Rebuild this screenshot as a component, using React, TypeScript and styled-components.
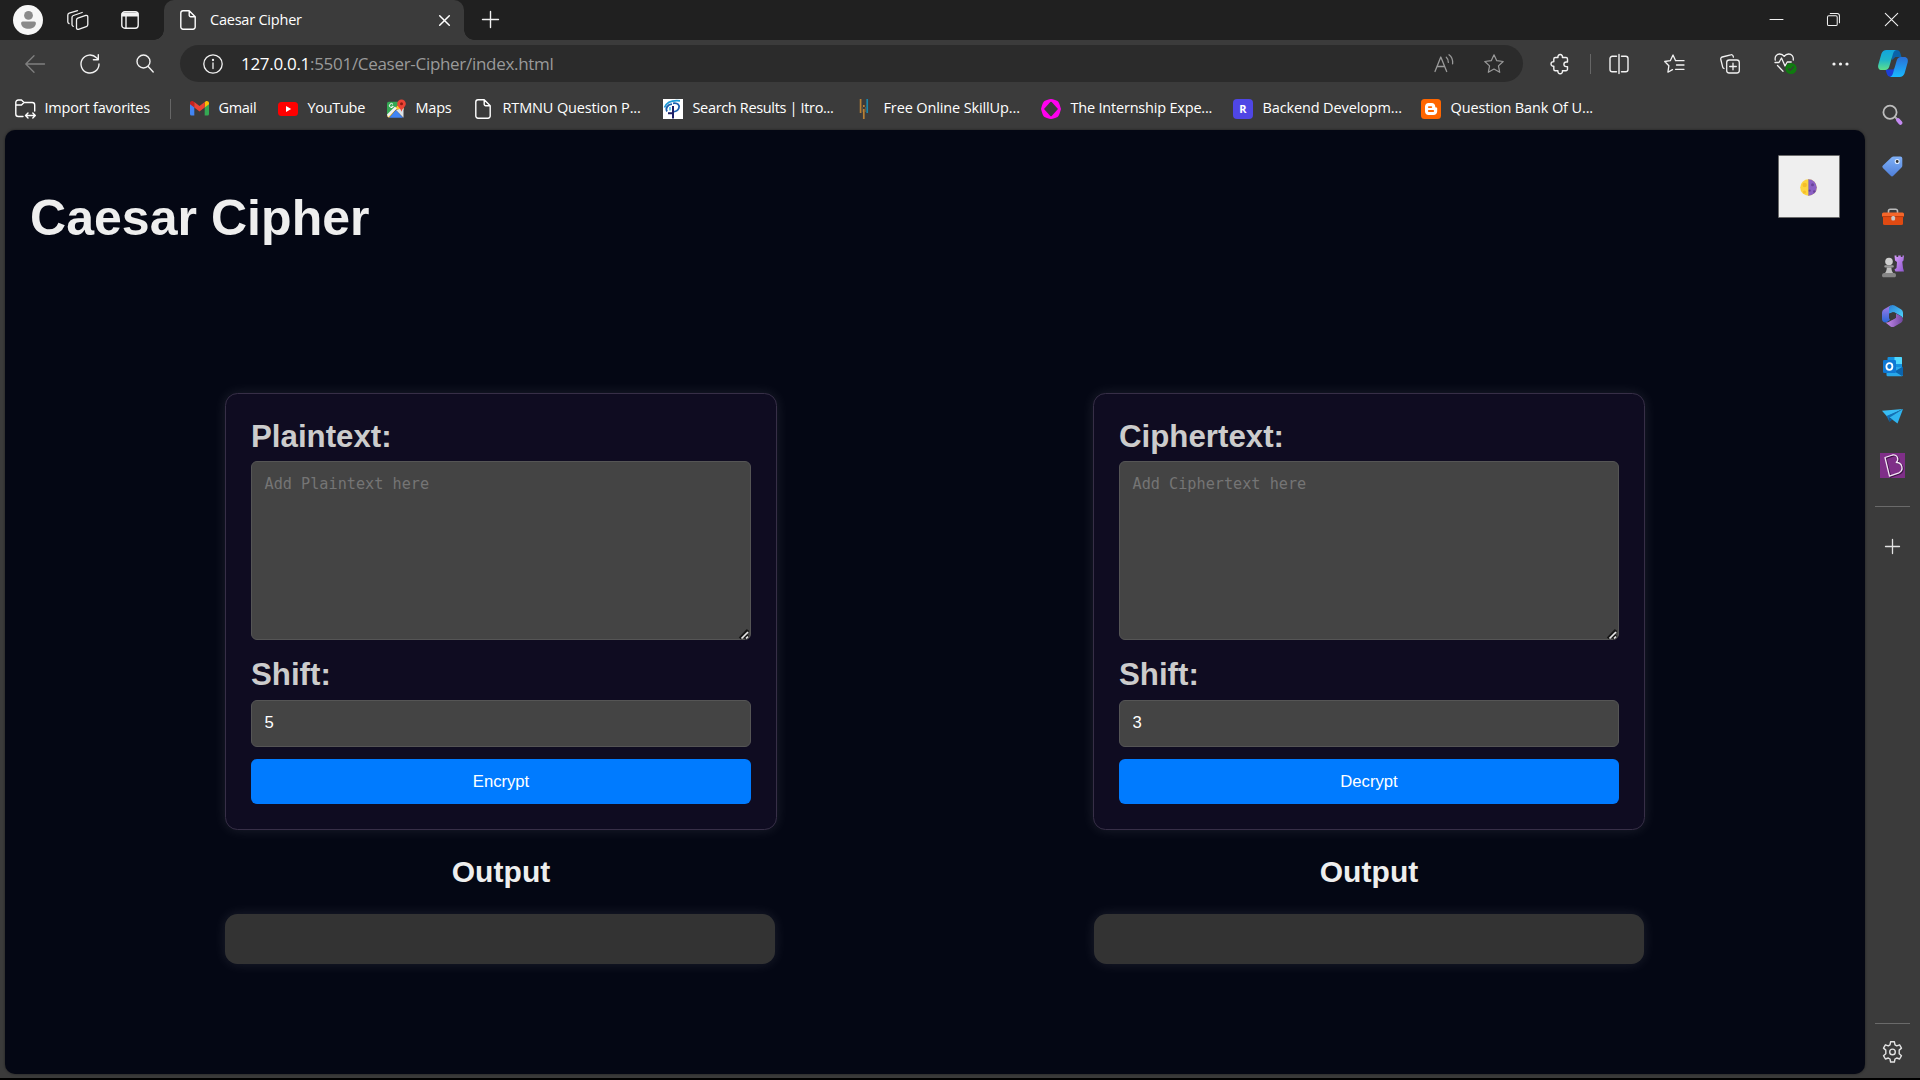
import React from 'react';
import styled, { createGlobalStyle } from 'styled-components';

const GlobalStyle = createGlobalStyle`
  * { box-sizing: border-box; }
  html, body { margin: 0; padding: 0; background: #000; overflow: hidden; }
  svg { display: block; overflow: visible; flex: none; }
`;

const uiFont = `'Open Sans', 'Noto Sans', sans-serif`;

const Browser = styled.div`
  width: 1920px;
  height: 1080px;
  border-bottom: 2px solid #000;
  background: #3b3b3b;
  display: flex;
  flex-direction: column;
  color: #fff;
  font-family: ${uiFont};
`;

const TabStrip = styled.div`
  height: 40px;
  flex: none;
  display: flex;
  align-items: center;
  background: #202020;
`;

const Cell = styled.div<{ $w: number; $color?: string }>`
  width: ${p => p.$w}px;
  height: 40px;
  flex: none;
  display: flex;
  align-items: center;
  justify-content: center;
  color: ${p => p.$color || '#f2f2f2'};
`;

const WindowCell = styled(Cell)`
  padding-bottom: 1px;
`;

const Avatar = styled.div`
  width: 30px;
  height: 30px;
  margin: 0 14px 0 13px;
  border-radius: 50%;
  background: #f7f7f7;
  display: flex;
  align-items: center;
  justify-content: center;
`;

const Tab = styled.div`
  width: 300px;
  height: 40px;
  margin-left: 4px;
  padding: 0 14px 0 16px;
  display: flex;
  align-items: center;
  background: #3b3b3b;
  border-radius: 10px 10px 0 0;
  position: relative;
  &::before, &::after {
    content: '';
    position: absolute;
    bottom: 0;
    width: 10px;
    height: 10px;
  }
  &::before { left: -10px; background: radial-gradient(circle at 0 0, #202020 9.5px, #3b3b3b 10px); }
  &::after { right: -10px; background: radial-gradient(circle at 100% 0, #202020 9.5px, #3b3b3b 10px); }
`;

const TabTitle = styled.span`
  flex: 1;
  margin-left: 14px;
  font-size: 14.5px;
  line-height: 20px;
  letter-spacing: -0.22px;
`;

const Spacer = styled.div`flex: 1;`;

const Toolbar = styled.div`
  height: 47px;
  flex: none;
  display: flex;
  align-items: center;
  padding-left: 7px;
`;

const AddressBar = styled.div`
  width: 1343px;
  height: 37px;
  flex: none;
  margin-left: 8px;
  padding: 0 5px 0 10px;
  display: flex;
  align-items: center;
  border-radius: 19px;
  background: #2b2b2b;
`;

const Url = styled.div`
  flex: 1;
  margin-left: 5px;
  font-size: 17px;
  line-height: 24px;
  letter-spacing: -0.3px;
  color: #9a9a9a;
  b { font-weight: 400; color: #fff; }
`;

const VRule = styled.div<{ $mr?: number }>`
  width: 1px;
  height: 20px;
  flex: none;
  margin-right: ${p => p.$mr || 0}px;
  background: #666;
`;

const Bookmarks = styled.div`
  height: 43px;
  flex: none;
  display: flex;
  align-items: center;
  padding-left: 15px;
`;

const Bookmark = styled.div<{ $w: number; $ls?: number }>`
  width: ${p => p.$w}px;
  flex: none;
  display: flex;
  align-items: center;
  gap: 9.5px;
  font-size: 14.5px;
  line-height: 20px;
  white-space: nowrap;
  letter-spacing: ${p => p.$ls ?? -0.3}px;
`;

const BookmarkText = styled.span`
  padding-bottom: 2px;
`;

const IconBox = styled.span`
  width: 20px;
  height: 20px;
  flex: none;
  display: flex;
  align-items: center;
  justify-content: center;
`;

const Tile = styled(IconBox)<{ $bg: string }>`
  border-radius: 4px;
  background: ${p => p.$bg};
  font-size: 11px;
  font-weight: 700;
  letter-spacing: 0;
`;

const Body = styled.div`
  flex: 1;
  min-height: 0;
  display: flex;
  padding-left: 5px;
`;

const Page = styled.main`
  width: 1860px;
  height: 944px;
  flex: none;
  border-radius: 10px;
  background: #040714;
  box-shadow: 0 0 3px rgba(0, 0, 0, 0.45);
  font-family: 'Liberation Sans', Arial, sans-serif;
`;

const PageHeader = styled.header`
  height: 263px;
  padding: 25px 25px 0;
  display: flex;
  align-items: flex-start;
  justify-content: space-between;
`;

const Title = styled.h1`
  margin: 34px 0 0;
  font-size: 50px;
  line-height: 58px;
  font-weight: 700;
  letter-spacing: 0.04px;
  color: #eee;
`;

const ThemeButton = styled.button`
  width: 62px;
  height: 63px;
  padding: 1px 1px 0 0;
  border: 1px solid #6b6b6b;
  border-radius: 1px;
  background: #efefef;
  display: flex;
  align-items: center;
  justify-content: center;
`;

const Columns = styled.div`
  display: flex;
  justify-content: space-between;
  padding: 0 220px;
`;

const Column = styled.section`
  width: 552px;
  display: flex;
  flex-direction: column;
`;

const Card = styled.div`
  height: 437px;
  padding: 26px 25px 25px;
  display: flex;
  flex-direction: column;
  border: 1px solid #372f47;
  border-radius: 12.5px;
  background: #0f0c21;
  box-shadow: 0 0 12.5px rgba(255, 255, 255, 0.1);
`;

const Label = styled.label`
  font-size: 31.25px;
  line-height: 34px;
  font-weight: 700;
  color: #ccc;
`;

const TextAreaWrap = styled.div`
  position: relative;
  margin: 7px 0 18px;
`;

const TextArea = styled.textarea`
  display: block;
  width: 500px;
  height: 179px;
  padding: 11.5px 12.5px;
  border: 1px solid #555;
  border-radius: 6px;
  background: #444;
  color: #fff;
  font-family: 'DejaVu Sans Mono', monospace;
  font-size: 15.2px;
  line-height: 20px;
  resize: none;
  outline: none;
  &::placeholder { color: #757575; }
`;

const Grip = styled.svg`
  position: absolute;
  right: 2px;
  bottom: 1px;
  cursor: ns-resize;
`;

const ShiftInput = styled.input`
  width: 500px;
  height: 47px;
  margin: 8px 0 12px;
  padding: 0 12.5px 2px;
  border: 1px solid #555;
  border-radius: 6px;
  background: #444;
  color: #fff;
  font-family: inherit;
  font-size: 16.67px;
  outline: none;
`;

const ActionButton = styled.button`
  width: 500px;
  height: 45px;
  padding: 0;
  border: 0;
  border-radius: 6px;
  background: #007bff;
  color: #fff;
  font-family: inherit;
  font-size: 16.67px;
`;

const OutputTitle = styled.h2`
  margin: 25px 0 25px;
  font-size: 30px;
  line-height: 34px;
  font-weight: 700;
  text-align: center;
  letter-spacing: 0.05px;
  color: #eee;
`;

const OutputBox = styled.div<{ $shift: number }>`
  width: 550px;
  height: 50px;
  margin-left: ${p => p.$shift}px;
  border-radius: 12.5px;
  background: #333;
  box-shadow: 0 0 12.5px rgba(255, 255, 255, 0.1);
`;

const Sidebar = styled.aside`
  width: 55px;
  height: 948px;
  display: flex;
  flex-direction: column;
  align-items: center;
`;

const SideCell = styled.div<{ $h?: number; $pt?: number }>`
  width: 55px;
  height: ${p => p.$h || 50}px;
  padding-top: ${p => p.$pt || 0}px;
  flex: none;
  display: flex;
  align-items: center;
  justify-content: center;
  color: #e2e2e2;
`;

const SideApps = styled.div`
  margin-top: -40px;
  flex: none;
`;

const SideRule = styled.div<{ $mt?: number }>`
  width: 35px;
  height: 1px;
  flex: none;
  margin-top: ${p => p.$mt || 0}px;
  background: #6a6a6a;
`;

type LineProps = { w?: number; h?: number; vb?: string; sw?: number; children: React.ReactNode };
const Line = ({ w = 20, h = 20, vb = '0 0 20 20', sw = 1.3, children }: LineProps) => (
  <svg width={w} height={h} viewBox={vb} fill="none" stroke="currentColor" strokeWidth={sw} strokeLinecap="round" strokeLinejoin="round">
    {children}
  </svg>
);

const PageIcon = () => (
  <Line w={16} h={20} vb="0 0 16 20" sw={1.4}>
    <path d="M3 .8h6.2l6 6V17a2.2 2.2 0 0 1-2.2 2.2H3A2.2 2.2 0 0 1 .8 17V3A2.2 2.2 0 0 1 3 .8zM9.2 1v4.3a1.5 1.5 0 0 0 1.5 1.5H15" />
  </Line>
);

const Workspaces = () => (
  <Line w={22} h={20} vb="0 0 22 20">
    <path d="M10.800 8.200 18.800 5.400a1.500 1.500 0 0 1 2 1.500v7.600a2.200 2.200 0 0 1-1.500 2.100l-7.800 2.700a1.500 1.500 0 0 1-2-1.400v-7.600a2.200 2.200 0 0 1 1.300-2.100z" />
    <path d="M6.200 16.300a1.600 1.600 0 0 1-1.200-1.500V7.600a2.200 2.200 0 0 1 1.400-2.100l8.800-3M2 13.500A1.600 1.600 0 0 1 .8 12V5.300a2.200 2.200 0 0 1 1.400-2.100L10.500.7" />
  </Line>
);

const TabActions = () => (
  <Line w={18} h={18} vb="0 0 18 18" sw={1.4}>
    <rect x=".8" y=".8" width="16.400" height="16.400" rx="3" />
    <path d="M1.300 2.300h15.400v2.500H1.300z" fill="currentColor" />
    <path d="M5 5.500v11.500" />
  </Line>
);

const Star = () => (
  <Line sw={1.2}>
    <path d="m10 .8 2.750 5.900 6.450.8-4.750 4.400 1.250 6.400L10 15.100 4.300 18.300l1.250-6.400L.8 7.500l6.450-.8z" />
  </Line>
);

const ReadAloud = () => (
  <Line w={20} h={19} vb="0 0 20 19">
    <path d="M1 17.500 6.800 3l5.900 14.500M3 12.500h7.700M12.300 3.200c1.600 1.400 2.100 3 2 5.200M15 .8c2.800 2 4 5 3.600 9" />
  </Line>
);

const Puzzle = () => (
  <Line w={19} h={20} vb="0 0 19 20" sw={1.400}>
    <path d="M5.300 3.500H8a2.300 2.300 0 1 1 4.400 0H16a1.500 1.500 0 0 1 1.500 1.500v3h-1.300a2.300 2.300 0 0 0 0 4.600h1.300v2.700a1.500 1.500 0 0 1-1.500 1.500h-3.600a2.300 2.300 0 1 1-4.400 0H5.300a1.500 1.500 0 0 1-1.500-1.500v-3.100a2.300 2.300 0 1 1 0-4.500V5a1.500 1.500 0 0 1 1.500-1.500z" />
  </Line>
);

const Split = () => (
  <Line w={20} h={20} sw={1.400}>
    <path d="M7.500 2.300H3.300A2.300 2.300 0 0 0 1 4.600v10.800a2.300 2.300 0 0 0 2.300 2.300h4.200M12.500 2.300h4.200A2.300 2.300 0 0 1 19 4.600v10.800a2.300 2.300 0 0 1-2.300 2.300h-4.200M10 .5v19" />
  </Line>
);

const Favorites = () => (
  <Line w={21} h={20} vb="0 0 21 20">
    <path d="M11.500 6.500 9 1 6.300 6.700.7 7.500l4.200 4.200-1 6.500 4.600-2.600M11.500 6.700H20M12.500 11H20M11.500 15.300H20" />
  </Line>
);

const Collections = () => (
  <Line w={20} h={20}>
    <rect x="6.700" y="6" width="12.600" height="13" rx="2.500" />
    <path d="M13 9.200v6.600M9.700 12.500h6.600M4 14.500a2 2 0 0 1-1.300-1.400L.8 5.500A2 2 0 0 1 2.200 3l8.500-2.200a2 2 0 0 1 2.500 1.500l.2.900" />
  </Line>
);

const Essentials = () => (
  <Line w={23} h={21} vb="0 0 23 21">
    <path d="M1.300 7.200C.4 3.500 3 1 5.700 1c2 0 3.500 1 4.500 2.400C11.200 2 12.700 1 14.700 1c2.700 0 5.200 2.500 4.500 6M1 9.500h4L7.500 5l3.500 8 2.200-4h4M3.500 12.500l5.500 5.700" />
    <circle cx="17" cy="15.500" r="5.600" fill="#0f7b0f" stroke="none" />
    <path d="m14.500 15.700 1.700 1.700 3.300-3.500" stroke="#3b3b3b" />
  </Line>
);

const Copilot = () => (
  <svg width="30" height="27" viewBox="0 0 30 27">
    <defs>
      <linearGradient id="cpA" x1="0" y1="0" x2="0" y2="1"><stop offset="0" stopColor="#12a5dd" /><stop offset=".5" stopColor="#1fb5c9" /><stop offset="1" stopColor="#5fe08a" /></linearGradient>
      <linearGradient id="cpB" x1="0" y1="0" x2="0" y2="1"><stop offset="0" stopColor="#2a6fd6" /><stop offset="1" stopColor="#19b9ff" /></linearGradient>
    </defs>
    <path d="M14 0h4.500a4 4 0 0 1 3.800 3l1.200 4h-6l-3.500 3z" fill="#0a62a8" />
    <path d="M7.500 19.500H15l2-2-2 9.500h-2.500a4 4 0 0 1-3.600-3z" fill="#1c3fd6" />
    <path d="M8.500 0H18c-2 .8-2.600 2.500-3.200 4.500l-3.500 12c-.7 2.200-2 3.500-4.200 3.500H3.800C.8 20-.4 17.600.3 14.700L3.400 3.800C4.200 1.500 6 0 8.500 0z" fill="url(#cpA)" />
    <path d="M21.500 27H12c2-.8 2.600-2.500 3.200-4.500l3.500-12c.7-2.200 2-3.500 4.200-3.500h3.300c3 0 4.200 2.400 3.500 5.300l-3.100 10.900c-.8 2.300-2.600 3.800-5.100 3.800z" fill="url(#cpB)" />
  </svg>
);

const Gmail = () => (
  <svg width="19" height="14.500" viewBox="0 0 19 14.500">
    <path d="M0 2v11a1.500 1.500 0 0 0 1.500 1.500h2.800V5z" fill="#4285f4" />
    <path d="M14.700 5v9.500h2.800A1.500 1.500 0 0 0 19 13V2z" fill="#34a853" />
    <path d="M14.700 1v5.500L19 3.300V2c0-1.800-2-2.600-3.400-1.600z" fill="#fbbc04" />
    <path d="M0 2v1.300l4.300 3.200V1L3.400.4C2 -.6 0 .2 0 2z" fill="#c5221f" />
    <path d="M4.300 6.500V1l5.200 3.900L14.700 1v5.500l-5.200 3.900z" fill="#ea4335" />
  </svg>
);

const YouTube = () => (
  <svg width="20" height="14" viewBox="0 0 20 14">
    <rect width="20" height="14" rx="3.500" fill="#f00" />
    <path d="M8 4v6l5.200-3z" fill="#fff" />
  </svg>
);

const Maps = () => (
  <svg width="19" height="18" viewBox="0 0 19 18">
    <path d="M0 3.500A1.800 1.800 0 0 1 1.800 1.700H14L0 16z" fill="#34a853" />
    <path d="M0 16 14 2l2.500 5v3L9 9.500 2 18z" fill="#fbc02d" />
    <path d="M2 17.800 9 10l7 7.800z" fill="#4285f4" />
    <path d="m9 10 7.500 7.800V8z" fill="#dfe3e8" />
    <path d="m0 14.500 8-8 1.800 1.900L1 17.300z" fill="#f1f3f4" />
    <path d="M6 4.300a2 2 0 1 0 .3 2H4.500" fill="none" stroke="#fff" strokeWidth="1" />
    <path d="M14.500-.5a4.300 4.300 0 0 1 4.300 4.300c0 3-3.300 4-4.300 8-1-4-4.300-5-4.300-8A4.300 4.300 0 0 1 14.500-.5z" fill="#ea4335" />
    <circle cx="14.500" cy="3.800" r="1.500" fill="#8e1b12" />
  </svg>
);

const Itro = () => (
  <svg width="20" height="20" viewBox="0 0 20 20">
    <path d="M0 0h20v20H0z" fill="#fff" />
    <path d="M1.500 8.500C3.500 3.500 9 1 17 1.800" fill="none" stroke="#1c9ad6" strokeWidth="1.700" />
    <path d="M4 12.500c-2-3.500 1-7 5-7.300M10 4.300c5-.8 7 2.200 5.800 5-1 2.700-3.800 3.500-6.300 3.500" fill="none" stroke="#1b5fae" strokeWidth="1.800" />
    <path d="M10 7v12.500M5 14.300h6" fill="none" stroke="#1c1f66" strokeWidth="2" />
    <path d="M7 8v3.500" stroke="#33b7e8" strokeWidth="1.500" />
  </svg>
);

const SkillUp = () => (
  <svg width="20" height="20" viewBox="0 0 20 20" fill="none">
    <path d="M6.600 0v14" stroke="#b98135" strokeWidth="1.700" />
    <path d="M9.800 6v2M9.800 10v10" stroke="#b98135" strokeWidth="1.700" />
    <path d="M13.200 0v14" stroke="#1a87ad" strokeWidth="1.700" />
    <path d="M8.200 8v5M11.500 8v5" stroke="#66563f" strokeWidth="1" />
  </svg>
);

const Internship = () => (
  <svg width="20" height="20" viewBox="0 0 20 20">
    <path fillRule="evenodd" fill="#f0e" d="M10 0c2.500 0 4 1.200 6.500 2C18 3 18.500 5 20 10c-1.500 5-2 7-3.500 8-2.500.800-4 2-6.500 2s-4-1.200-6.500-2C2 17 1.500 15 0 10 1.500 5 2 3 3.500 2 6 1.200 7.500 0 10 0zM9.300 3 3 10l6.300 7a1 1 0 0 0 1.400 0L17 10l-6.300-7a1 1 0 0 0-1.400 0z" />
  </svg>
);

const Blogger = () => (
  <svg width="20" height="20" viewBox="0 0 20 20">
    <rect width="20" height="20" rx="3.500" fill="#f60" />
    <path fillRule="evenodd" fill="#fff" d="M7.500 4h3.300c2 0 3.400 1.500 3.400 3.300 0 .8.300 1.200 1 1.200s1 .4 1 1v2.700c0 2.200-1.600 3.800-3.700 3.800h-5C5.400 16 4 14.400 4 12.300V7.600C4 5.500 5.500 4 7.500 4zm.300 3.200a.9.900 0 0 0 0 1.800h2.500a.9.900 0 0 0 0-1.800zm0 3.900a.9.900 0 0 0 0 1.800h4.400a.9.900 0 0 0 0-1.800z" />
  </svg>
);

const HalfMoon = () => (
  <svg width="17" height="17" viewBox="0 0 17 17">
    <circle cx="8.500" cy="8.500" r="8.300" fill="#fdd53f" />
    <path d="M8.500.2a8.300 8.300 0 0 1 0 16.600z" fill="#8b60c4" />
    <path d="M8.200.2h.7v16.600h-.7z" fill="#a08a8a" />
    <circle cx="4.700" cy="6" r="2.200" fill="#f5bd2b" />
    <circle cx="4.500" cy="13" r="1.500" fill="#f5bd2b" />
    <circle cx="12.500" cy="5.700" r="1.500" fill="#6a4499" />
    <circle cx="9.700" cy="11.700" r="1.100" fill="#6a4499" />
    <circle cx="14.200" cy="12.500" r="1.200" fill="#6a4499" />
  </svg>
);

const SideSearch = () => (
  <svg width="20" height="20" viewBox="0 0 20 20" fill="none">
    <path d="m11.500 11.500 3 3" stroke="#aaa" strokeWidth="2" />
    <path d="m15 15 2.500 2.800" stroke="#c48af2" strokeWidth="4" strokeLinecap="round" />
    <circle cx="7" cy="7.300" r="6.600" stroke="#bdbdbd" strokeWidth="1.800" />
  </svg>
);

const Tag = () => (
  <svg width="21" height="21" viewBox="0 0 21 21">
    <defs><linearGradient id="tg" x1="0" y1="0" x2="0" y2="1"><stop offset="0" stopColor="#7fb0f7" /><stop offset="1" stopColor="#4f7fd9" /></linearGradient></defs>
    <path d="M11.500.5h6.800A2 2 0 0 1 20.300 2.500v7.300a2.500 2.500 0 0 1-.8 1.800l-8.200 8.200a1.800 1.800 0 0 1-2.600 0L.9 12a1.800 1.800 0 0 1 0-2.600l8.700-8.100a2.800 2.800 0 0 1 1.900-.8z" fill="url(#tg)" />
    <circle cx="15.200" cy="5.500" r="2" fill="#333" stroke="#dcebff" strokeWidth="1.100" />
  </svg>
);

const Toolbox = () => (
  <svg width="22" height="18" viewBox="0 0 22 18">
    <path d="M6.500 5V3A1.800 1.800 0 0 1 8.300 1.200h5.400A1.800 1.800 0 0 1 15.500 3v2" fill="none" stroke="#bbb" strokeWidth="1.600" />
    <path d="M1 8h20v7.500A1.500 1.500 0 0 1 19.500 17h-17A1.500 1.500 0 0 1 1 15.500z" fill="#e04a12" />
    <path d="M1.500 4.500h19A1.500 1.500 0 0 1 22 6v3H0V6a1.500 1.500 0 0 1 1.500-1.500z" fill="#f4662a" />
    <path d="M0 8.600h22" stroke="#b93a0d" />
    <rect x="9.300" y="8" width="3.800" height="4.400" rx="1.500" fill="#c8c8c8" />
  </svg>
);

const Chess = () => (
  <svg width="22" height="23" viewBox="0 0 22 23">
    <defs><linearGradient id="rk" x1="0" y1="0" x2="1" y2="1"><stop offset="0" stopColor="#d59cf8" /><stop offset="1" stopColor="#8f57cf" /></linearGradient></defs>
    <path d="M12.500.5h2V2h1.700V.5h2.600V2h1.700V.5H22l-.5 5-1.200 1.200.7 6.300 1 3.500h-8.500l-1-2 2-1.500.5-6L13 5.500z" fill="url(#rk)" />
    <circle cx="7" cy="6.500" r="3.800" fill="#cfcfcf" />
    <rect x="2.300" y="10.300" width="9.500" height="2.200" rx="1" fill="#9b9b9b" />
    <path d="M4.800 12.500h4.600c0 3 1 4.500 2.300 6.500H2.500c1.300-2 2.300-3.500 2.300-6.500z" fill="#c0c0c0" />
    <path d="M2 18h10.200a2 2 0 0 1 1.800 2.300c0 1.400-.7 2-1.600 2H1.700c-1 0-1.700-.6-1.700-2A2.200 2.200 0 0 1 2 18z" fill="#858585" />
  </svg>
);

const M365 = () => (
  <svg width="21" height="22" viewBox="0 0 21 22">
    <defs>
      <linearGradient id="ma" x1="0" y1="0" x2="0" y2="1"><stop offset="0" stopColor="#a77be8" /><stop offset="1" stopColor="#2766d8" /></linearGradient>
      <linearGradient id="mb" x1="0" y1="0" x2="1" y2="1"><stop offset="0" stopColor="#2a7fd4" /><stop offset="1" stopColor="#4fd8ff" /></linearGradient>
      <linearGradient id="mc" x1="0" y1="0" x2="1" y2="0"><stop offset="0" stopColor="#c98cf0" /><stop offset="1" stopColor="#6f479e" /></linearGradient>
    </defs>
    <path d="M9 .3 2 4.300A4 4 0 0 0 0 7.800v6.500c0 2.500 2.800 4 5 2.700l3-2-1-2V6.500C7 4 7.500 2 9 .3z" fill="url(#ma)" />
    <path d="M8.600.600a4 4 0 0 1 4 0L19 4.300a4 4 0 0 1 2 3.500v5.500c-.5-1.200-1.500-2-2.500-2.600L12 7 7 8.500V5c0-2 .3-3.500 1.600-4.400z" fill="url(#mb)" />
    <path d="M3.500 17.500c1.500.3 3-.4 4-1l6.500-3.700v-4L18.500 11c3 1.800 3 5 .5 6.700l-6.500 3.700a4 4 0 0 1-4 0z" fill="url(#mc)" />
    <path d="m10.500 7.200 3.500 2v3.600l-3.500 2-3.500-2V9.200z" fill="#3b3b3b" />
  </svg>
);

const Outlook = () => (
  <svg width="20" height="20" viewBox="0 0 20 20">
    <rect x="4.500" y="0" width="14.500" height="14" rx="1" fill="#1490df" />
    <path d="M11.500 0H18a1 1 0 0 1 1 1v6h-7.500z" fill="#50d9ff" />
    <path d="M3.500 10H20v8a1.200 1.200 0 0 1-1.200 1.200H4.700A1.200 1.200 0 0 1 3.500 18z" fill="#28a8ea" />
    <path d="m20 9.500-8.500 5 7.500 4.500a1.200 1.200 0 0 0 1-1.200z" fill="#0b64ad" />
    <rect x="0" y="3" width="13" height="13" rx="1.300" fill="#0f78d4" />
    <ellipse cx="6.400" cy="9.500" rx="3" ry="3.300" fill="none" stroke="#fff" strokeWidth="1.800" />
  </svg>
);

const Telegram = () => (
  <svg width="21" height="15" viewBox="0 0 21 15">
    <path d="M0 1.700 21 0 5 7.500z" fill="#38bdf5" />
    <path d="M4.500 7 21 0 7.500 8.700V13z" fill="#1170b8" />
    <path d="M7.500 8.500 21 0l-5.500 14.500z" fill="#2fb4f0" />
    <path d="m7.500 13 3-2.500-3-2z" fill="#0d5c9c" />
  </svg>
);

const BoxB = () => (
  <svg width="25" height="25" viewBox="0 0 25 25">
    <path d="M0 0h25v25H0z" fill="#7f2f88" />
    <path d="M5 4.500 12.500 2c4.500-1 7 4 3.800 7.500 6.200 0 7.700 7.500 2.700 10.300L9.500 23.200z" transform="translate(1 .8)" fill="none" stroke="#3d1245" strokeWidth="1.400" />
    <path d="M5 4.500 12.500 2c4.500-1 7 4 3.800 7.500 6.200 0 7.700 7.500 2.700 10.300L9.500 23.200z" fill="none" stroke="#f4e6f5" strokeWidth="1.300" strokeLinejoin="round" />
  </svg>
);

const Gear = () => (
  <Line w={21} h={22} vb="0 0 21 21" sw={1.400}>
    <path d="M8.600.3h3.800l.6 3 1.700 1 2.900-1 1.900 3.300-2.300 2v3.600l2.300 2-1.900 3.300-2.900-1-1.700 1-.6 3H8.600l-.6-3-1.700-1-2.900 1-1.900-3.300 2.300-2V8.600l-2.300-2 1.900-3.300 2.900 1 1.700-1z" />
    <circle cx="10.500" cy="10.400" r="2.800" />
  </Line>
);

type PanelProps = { label: string; placeholder: string; shift: string; action: string; boxShift: number };
const CipherPanel = ({ label, placeholder, shift, action, boxShift }: PanelProps) => (
  <Column>
    <Card>
      <Label>{label}</Label>
      <TextAreaWrap>
        <TextArea placeholder={placeholder} />
        <Grip width="10" height="10" viewBox="0 0 10 10" fill="none">
          <path d="M1 9.500 9 1M5.500 9.500 9 6" stroke="#161616" strokeWidth="3.200" />
          <path d="M2.500 9.500 9 3M7 9.500l2-2" stroke="#e6e6e6" strokeWidth="1.700" />
        </Grip>
      </TextAreaWrap>
      <Label>Shift:</Label>
      <ShiftInput defaultValue={shift} />
      <ActionButton>{action}</ActionButton>
    </Card>
    <OutputTitle>Output</OutputTitle>
    <OutputBox $shift={boxShift} />
  </Column>
);

const bookmarks = [
  { w: 89, ls: -0.3, icon: <Gmail />, text: 'Gmail' },
  { w: 108, ls: -0.3, icon: <YouTube />, text: 'YouTube' },
  { w: 87, ls: -0.2, icon: <Maps />, text: 'Maps' },
  { w: 190, ls: -0.14, icon: <PageIcon />, text: 'RTMNU Question P...' },
  { w: 191, ls: -0.34, icon: <Itro />, text: 'Search Results | Itro...' },
  { w: 187, ls: -0.13, icon: <SkillUp />, text: 'Free Online SkillUp...' },
  { w: 192, ls: -0.2, icon: <Internship />, text: 'The Internship Expe...' },
  { w: 188, ls: -0.13, icon: null, text: 'Backend Developm...' },
  { w: 180, ls: -0.12, icon: <Blogger />, text: 'Question Bank Of U...' },
];

const sideApps = [
  { Icon: SideSearch, pt: 0 },
  { Icon: Tag, pt: 2 },
  { Icon: Toolbox, pt: 3 },
  { Icon: Chess, pt: 2 },
  { Icon: M365, pt: 2 },
  { Icon: Outlook, pt: 3 },
  { Icon: Telegram, pt: 2 },
  { Icon: BoxB, pt: 0 },
];

export default function App() {
  return (
    <Browser>
      <GlobalStyle />
      <TabStrip>
        <Avatar>
          <svg width="15" height="18" viewBox="0 0 15 18" fill="#8a8a8a">
            <circle cx="7.500" cy="4.400" r="4.400" />
            <path d="M2 10.500h11a1.800 1.800 0 0 1 1.900 2c-.4 3.500-3.500 5.300-7.400 5.300S.5 16 .1 12.500a1.800 1.800 0 0 1 1.900-2z" />
          </svg>
        </Avatar>
        <Cell $w={42}><Workspaces /></Cell>
        <Cell $w={61}><TabActions /></Cell>
        <Tab>
          <PageIcon />
          <TabTitle>Caesar Cipher</TabTitle>
          <Line w={11} h={11} vb="0 0 11 11" sw={1.5}><path d="m.7.7 9.600 9.600M10.300.7.7 10.300" /></Line>
        </Tab>
        <WindowCell $w={53}><Line w={17} h={17} vb="0 0 17 17" sw={1.4}><path d="M8.500.5v16M.5 8.500h16" /></Line></WindowCell>
        <Spacer />
        <WindowCell $w={57}><Line w={13} h={13} vb="0 0 13 13" sw={1}><path d="M0 6.500h13" /></Line></WindowCell>
        <WindowCell $w={57}><Line w={13} h={13} vb="0 0 14 14" sw={1.1}>
          <rect x=".5" y="3" width="10.500" height="10.500" rx="1.500" />
          <path d="M3.500.6H11A2.500 2.500 0 0 1 13.400 3v7.500" />
        </Line></WindowCell>
        <WindowCell $w={58}><Line w={13} h={13} vb="0 0 13 13" sw={1.1}><path d="m.3.300 12.400 12.400M12.700.3.300 12.700" /></Line></WindowCell>
      </TabStrip>

      <Toolbar>
        <Cell $w={55} $color="#808080"><Line w={20} h={18} vb="0 0 20 18"><path d="M9 .8.8 9 9 17.200M1 9h18.500" /></Line></Cell>
        <Cell $w={55}><Line w={20} h={20} sw={1.400}><path d="M19 10A9 9 0 1 1 16.500 3.800L18.300 5.500M18.300.8v4.900h-4.900" /></Line></Cell>
        <Cell $w={55}><Line w={18} h={19} vb="0 0 18 19" sw={1.4}><circle cx="7.500" cy="7.500" r="6.500" /><path d="m12.200 12.500 5 5.500" /></Line></Cell>
        <AddressBar>
          <Cell $w={46}><Line w={20} h={20} sw={1.300}><circle cx="10" cy="10" r="9.200" /><path d="M10 9v5.500" /><circle cx="10" cy="6" r=".5" fill="currentColor" /></Line></Cell>
          <Url><b>127.0.0.1</b>:5501/Ceaser-Cipher/index.html</Url>
          <Cell $w={50} $color="#9a9a9a"><ReadAloud /></Cell>
          <Cell $w={49} $color="#9a9a9a"><Star /></Cell>
        </AddressBar>
        <Cell $w={6} />
        <Cell $w={61}><Puzzle /></Cell>
        <VRule />
        <Cell $w={56}><Split /></Cell>
        <Cell $w={55}><Favorites /></Cell>
        <Cell $w={55}><Collections /></Cell>
        <Cell $w={57}><Essentials /></Cell>
        <Cell $w={52}><svg width="17" height="4" viewBox="0 0 17 4" fill="#f2f2f2"><circle cx="2" cy="2" r="1.600" /><circle cx="8.500" cy="2" r="1.600" /><circle cx="15" cy="2" r="1.600" /></svg></Cell>
        <Cell $w={54}><Copilot /></Cell>
      </Toolbar>

      <Bookmarks>
        <Bookmark $w={155} $ls={-0.2}>
          <IconBox>
            <Line w={21} h={20} vb="0 0 21 20" sw={1.400}>
              <path d="M8 17.500H3.300A2.500 2.500 0 0 1 .8 15V3.500A2.500 2.500 0 0 1 3.300 1h3.200L9 3.500h8.200A2.500 2.500 0 0 1 19.700 6v6M.8 6h5.700L9 3.500M10.800 16.500h9M13 14l-2.500 2.500L13 19M17.800 14l2.500 2.500-2.500 2.500" />
            </Line>
          </IconBox>
          <BookmarkText>Import favorites</BookmarkText>
        </Bookmark>
        <VRule $mr={18} />
        {bookmarks.map(b => (
          <Bookmark key={b.text} $w={b.w} $ls={b.ls}>
            {b.icon ? <IconBox>{b.icon}</IconBox> : <Tile $bg="#4f46e5">R</Tile>}
            <BookmarkText>{b.text}</BookmarkText>
          </Bookmark>
        ))}
      </Bookmarks>

      <Body>
        <Page>
          <PageHeader>
            <Title>Caesar Cipher</Title>
            <ThemeButton><HalfMoon /></ThemeButton>
          </PageHeader>
          <Columns>
            <CipherPanel label="Plaintext:" placeholder="Add Plaintext here" shift="5" action="Encrypt" boxShift={0} />
            <CipherPanel label="Ciphertext:" placeholder="Add Ciphertext here" shift="3" action="Decrypt" boxShift={1} />
          </Columns>
        </Page>
        <Sidebar>
          <SideApps>
            {sideApps.map(({ Icon, pt }, i) => <SideCell key={i} $pt={pt}><Icon /></SideCell>)}
          </SideApps>
          <SideRule $mt={16} />
          <SideCell $h={78}><Line w={15} h={15} vb="0 0 15 15" sw={1.3}><path d="M7.500.5v14M.5 7.500h14" /></Line></SideCell>
          <Spacer />
          <SideRule />
          <SideCell $h={54} $pt={2}><Gear /></SideCell>
        </Sidebar>
      </Body>
    </Browser>
  );
}
